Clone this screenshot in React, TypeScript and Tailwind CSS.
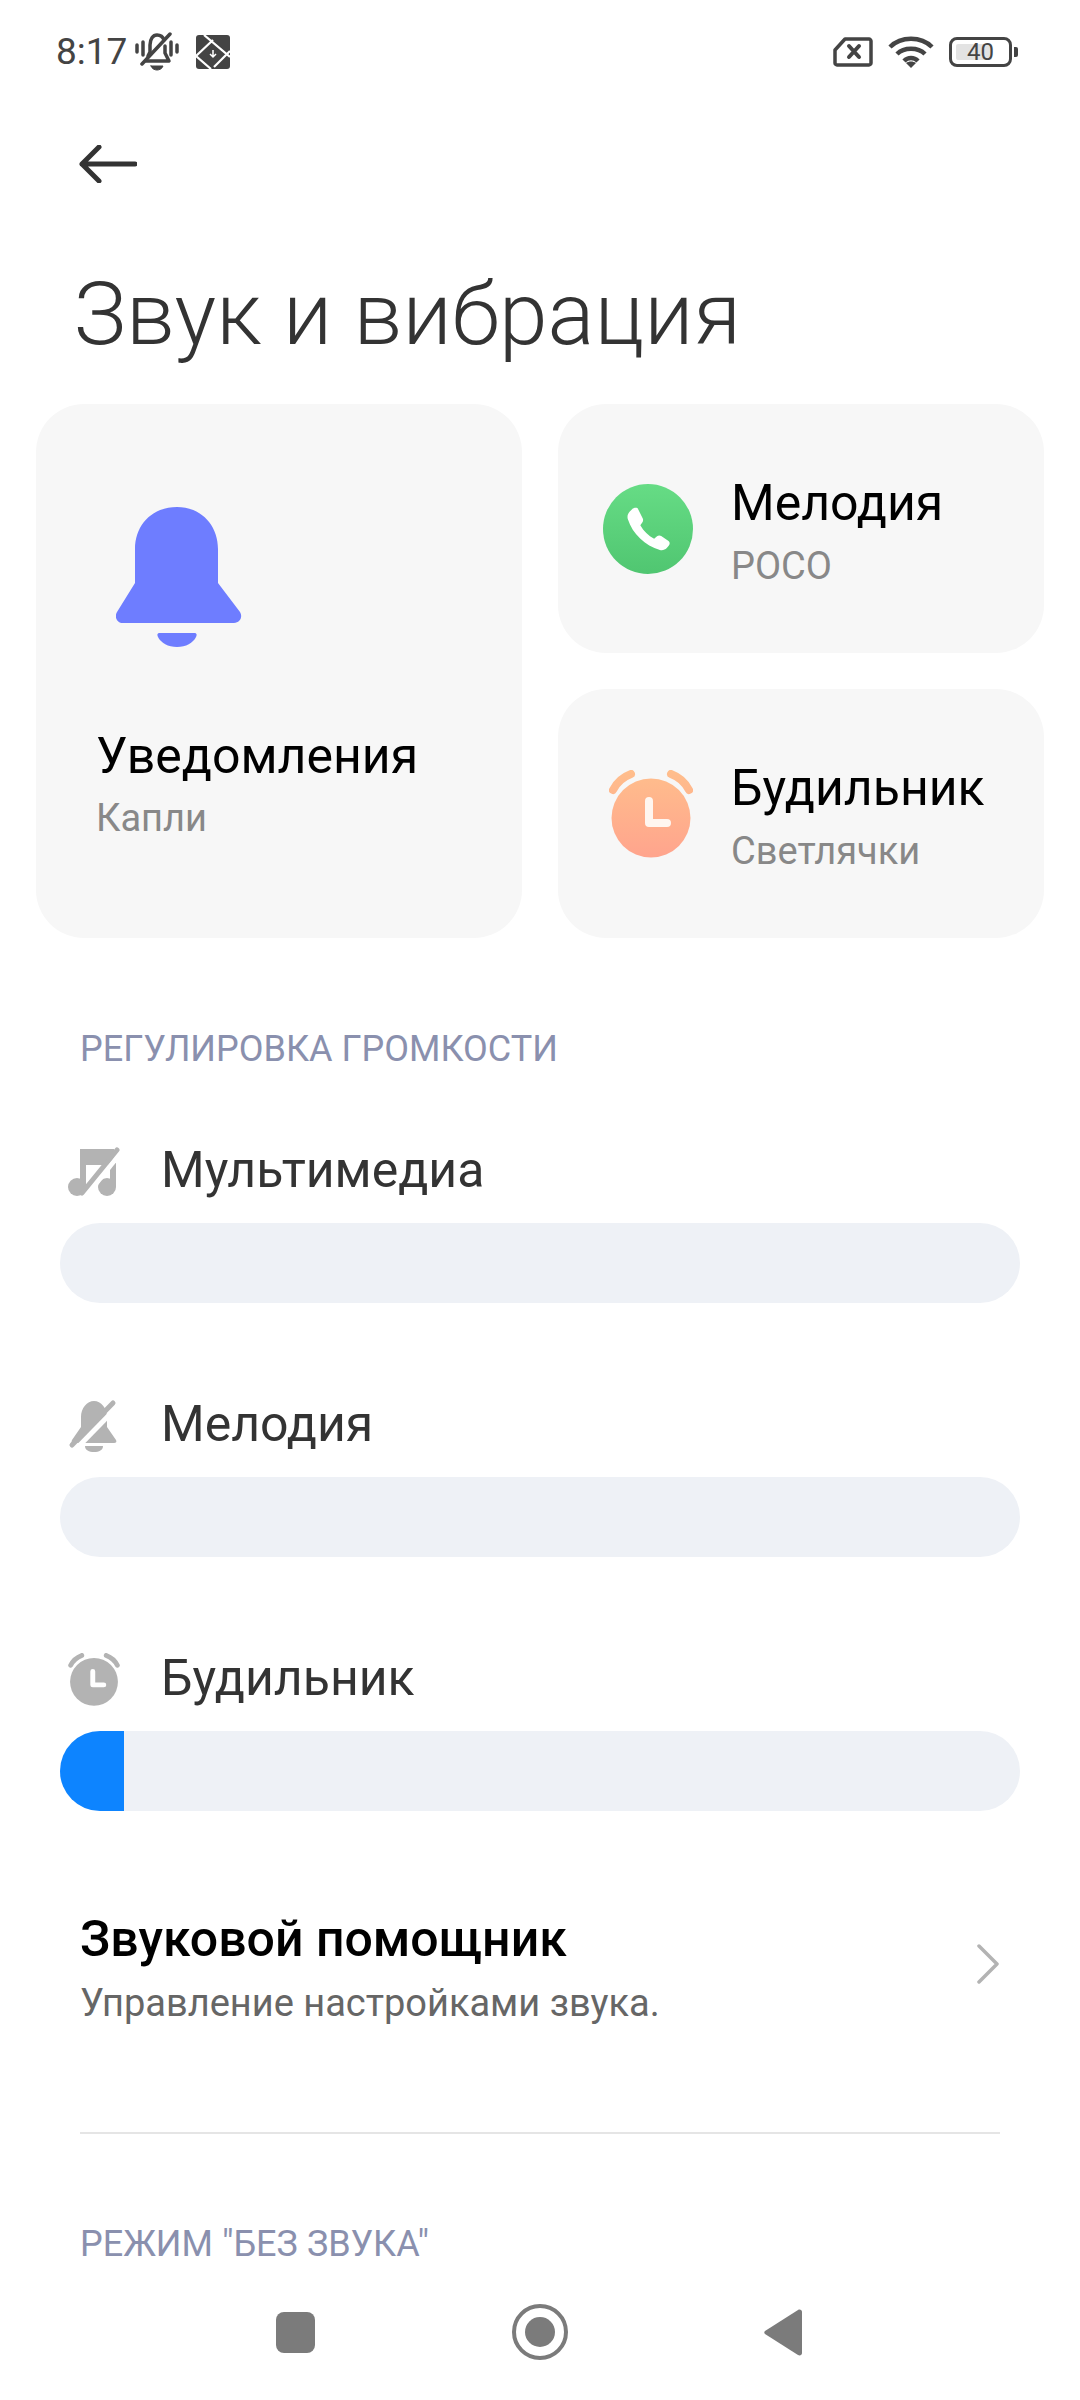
import React from "react";

const font = "font-['Roboto','Noto_Sans',sans-serif]";

function NoteOffIcon() {
  return (
    <svg width="52" height="50" viewBox="0 0 52 50" fill="none">
      <circle cx="9" cy="40" r="9" fill="#b3b3b3" />
      <circle cx="39" cy="40" r="9" fill="#b3b3b3" />
      <path d="M12 2H46V18H18V40H12Z" fill="#b3b3b3" />
      <rect x="42" y="16" width="6" height="24" fill="#b3b3b3" />
      <path d="M54 4L18 49" stroke="#fff" strokeWidth="5" />
      <path d="M49 3L14 46" stroke="#b3b3b3" strokeWidth="5" strokeLinecap="round" />
    </svg>
  );
}

function BellOffIcon() {
  return (
    <svg width="52" height="54" viewBox="0 0 52 54" fill="none">
      <path d="M13 18C13 9 19 2 26 2C33 2 39 9 39 18V28L48 41C49 43 48 44 46 44H6C4 44 3 43 4 41L13 28Z" fill="#b3b3b3" />
      <path d="M17 47H35C35 51 31 53 26 53C21 53 17 51 17 47Z" fill="#b3b3b3" />
      <path d="M50 7L7 51" stroke="#fff" strokeWidth="5" />
      <path d="M45 4L4 46" stroke="#b3b3b3" strokeWidth="5" strokeLinecap="round" />
    </svg>
  );
}

function GreyAlarmIcon() {
  return (
    <svg width="52" height="54" viewBox="0 0 84 88" fill="none">
      <circle cx="42" cy="47" r="39" fill="#b3b3b3" />
      <path d="M4 20C8 12 14 7 22 4M80 20C76 12 70 7 62 4" stroke="#b3b3b3" strokeWidth="8" strokeLinecap="round" />
      <path d="M40 30V52H58" stroke="#fff" strokeWidth="8" strokeLinecap="round" strokeLinejoin="round" />
    </svg>
  );
}

function VolumeRow({ icon, label, fill }: { icon: React.ReactNode; label: string; fill?: boolean }) {
  return (
    <div className="flex flex-col mb-[83px]">
      <div className="flex items-center h-[80px] mb-[11px] pl-[68px]">
        <div className="w-[93px] flex items-center">{icon}</div>
        <span className="text-[50px] leading-[56px] -translate-y-[2px] text-[#333333]">{label}</span>
      </div>
      <div className="mx-[60px] h-[80px] rounded-[40px] bg-[#eef1f6] overflow-hidden">
        {fill && <div className="h-full w-[64px] bg-[#0d84ff]" />}
      </div>
    </div>
  );
}

export default function App() {
  return (
    <div className={`${font} relative w-[1080px] h-[2400px] bg-white overflow-hidden flex flex-col`}>
      {/* status bar */}
      <div className="h-[104px] shrink-0 flex items-center justify-between pl-[56px] pr-[62px]">
        <div className="flex items-center">
          <span className="text-[37px] leading-[40px] text-[#444444]">8:17</span>
          <svg className="ml-[7px]" width="46" height="40" viewBox="0 0 46 40" fill="none" stroke="#444444" strokeLinecap="round">
            <path d="M3 13V20M9 10V23M37 10V23M43 13V20" strokeWidth="3.5" />
            <path d="M14 24L16 20V13C16 7 19 3 23 3C27 3 29 5 30 8M31 14V21L35 29H12" strokeWidth="3.5" strokeLinejoin="round" />
            <path d="M36 2L8 32" strokeWidth="3.5" />
            <path d="M17 34H29C28 37 25 38 23 38C21 38 18 37 17 34Z" fill="#444444" strokeWidth="1" />
          </svg>
          <svg className="ml-[16px]" width="34" height="34" viewBox="0 0 34 34">
            <rect width="34" height="34" rx="3" fill="#444444" />
            <path d="M8 0L34 22M0 21L17 5M0 21L15 34M34 16L18 32" stroke="#fff" strokeWidth="2.2" fill="none" />
            <path d="M17 15V22M14 19L17 22L20 19" stroke="#fff" strokeWidth="1.5" fill="none" />
          </svg>
        </div>
        <div className="flex items-center">
          <svg width="40" height="30" viewBox="0 0 40 30" fill="none">
            <path d="M2 13L12 2H36C37 2 38 3 38 4V26C38 27 37 28 36 28H4C3 28 2 27 2 26Z" stroke="#444444" strokeWidth="3.5" strokeLinejoin="round" />
            <path d="M16 9L26 20M26 9L16 20" stroke="#444444" strokeWidth="4" strokeLinecap="round" />
          </svg>
          <svg className="ml-[15px]" width="46" height="34" viewBox="0 0 46 34" fill="none" stroke="#444444" strokeWidth="4.5">
            <path d="M2 12C13 1 33 1 44 12" />
            <path d="M9 19C16 12 30 12 37 19" />
            <path d="M16 26C20 22 26 22 30 26" />
            <path d="M23 33L18 28C21 26 25 26 28 28Z" fill="#444444" stroke="none" />
          </svg>
          <div className="relative ml-[15px] w-[63px] h-[30px] rounded-[8px] border-[3px] border-[#444444]">
            <div className="absolute left-[4px] top-[4px] bottom-[4px] w-[36px] rounded-[2px] bg-[#e3e3e3]" />
            <span className="absolute inset-0 flex items-center justify-center text-[24px] leading-[24px] text-[#444444]">40</span>
          </div>
          <div className="ml-[2px] w-[4px] h-[10px] rounded-r-[2px] bg-[#444444]" />
        </div>
      </div>

      {/* back */}
      <div className="h-[120px] shrink-0 flex items-center pl-[79px]">
        <svg width="58" height="38" viewBox="0 0 58 38" fill="none" stroke="#333333" strokeWidth="5" strokeLinecap="round" strokeLinejoin="round">
          <path d="M56 19H3M20 2L3 19L20 36" />
        </svg>
      </div>

      <div className="h-[180px] shrink-0 flex items-center pl-[74px]">
        <h1 className="text-[87.500px] leading-[100px] font-light text-[#333333]">Звук и вибрация</h1>
      </div>

      {/* cards */}
      <div className="shrink-0 grid grid-cols-2 gap-x-[36px] px-[36px] h-[534px]">
        <div className="rounded-[48px] bg-[#f7f7f7] pl-[60px] flex flex-col">
          <svg className="ml-[20px] mt-[103px]" width="126" height="140" viewBox="0 0 126 140" fill="#6e7dff">
            <path d="M19 42C19 18 36 0 61 0C85 0 102 18 102 42V76L124 105C127 110 124 116 118 116H7C1 116-2 110 1 105L19 76Z" />
            <path d="M44 126H78C81 126 81 128 80 130C77 136 70 140 61 140C52 140 45 136 42 130C41 128 41 126 44 126Z" />
          </svg>
          <div className="mt-[81px] text-[50px] leading-[56px] text-black">Уведомления</div>
          <div className="mt-[12px] text-[38px] leading-[44px] text-[#888888]">Капли</div>
        </div>
        <div className="flex flex-col gap-[36px]">
          <div className="flex-1 rounded-[48px] bg-[#f7f7f7] flex items-center pl-[45px]">
            <div className="w-[128px] shrink-0">
              <div className="w-[90px] h-[90px] rounded-full bg-gradient-to-b from-[#66dc85] to-[#50c671] flex items-center justify-center">
                <svg width="46" height="46" viewBox="0 0 24 24" fill="#fff">
                  <path d="M6.6 1.2C5.6 0.7 4.4 1 3.7 1.7L2.5 2.9C1.5 3.9 1 5.4 1.5 6.9C2.7 10.7 5 14.200 7.900 17C10.800 19.800 14.300 21.800 18.200 22.900C19.500 23.300 20.900 22.800 21.800 21.900L22.800 20.800C23.500 20 23.500 18.800 22.700 18.200L18.900 15.700C18.200 15.200 17.300 15.300 16.700 15.800L15.200 17.100C12.200 15.500 9.700 13.300 8 10.100L9.100 8.500C9.500 7.900 9.600 7 9.200 6.400Z" />
                </svg>
              </div>
            </div>
            <div className="flex flex-col pt-[6px]">
              <div className="text-[50px] leading-[56px] text-black">Мелодия</div>
              <div className="mt-[13px] text-[38px] leading-[44px] text-[#888888]">POCO</div>
            </div>
          </div>
          <div className="flex-1 rounded-[48px] bg-[#f7f7f7] flex items-center pl-[51px]">
            <div className="w-[122px] shrink-0">
              <svg width="84" height="88" viewBox="0 0 84 88" fill="none">
                <defs>
                  <linearGradient id="alarm" gradientUnits="userSpaceOnUse" x1="0" y1="0" x2="0" y2="88">
                    <stop offset="0" stopColor="#ffbe8c" />
                    <stop offset="1" stopColor="#ffa48d" />
                  </linearGradient>
                </defs>
                <circle cx="42" cy="48" r="39.500" fill="url(#alarm)" />
                <path d="M4 20C8 12 14 7 22 4M80 20C76 12 70 7 62 4" stroke="url(#alarm)" strokeWidth="8" strokeLinecap="round" />
                <path d="M40 31V53H58" stroke="#fff6f0" strokeWidth="8" strokeLinecap="round" strokeLinejoin="round" />
              </svg>
            </div>
            <div className="flex flex-col pt-[6px]">
              <div className="text-[50px] leading-[56px] text-black">Будильник</div>
              <div className="mt-[13px] text-[38px] leading-[44px] text-[#888888]">Светлячки</div>
            </div>
          </div>
        </div>
      </div>

      {/* volume */}
      <div className="pl-[80px] mt-[89px] text-[36px] leading-[44px] text-[#8a90ae]">РЕГУЛИРОВКА ГРОМКОСТИ</div>
      <div className="mt-[61px] flex flex-col">
        <VolumeRow icon={<NoteOffIcon />} label="Мультимедиа" />
        <VolumeRow icon={<BellOffIcon />} label="Мелодия" />
        <VolumeRow icon={<GreyAlarmIcon />} label="Будильник" fill />
      </div>

      {/* assistant */}
      <div className="flex items-center justify-between pl-[80px] pr-[80px] mt-[17px]">
        <div className="flex flex-col">
          <div className="text-[50px] leading-[56px] font-medium text-black">Звуковой помощник</div>
          <div className="mt-[14px] text-[38px] leading-[44px] text-[#666666]">Управление настройками звука.</div>
        </div>
        <svg className="mb-[9px]" width="24" height="40" viewBox="0 0 24 40" fill="none" stroke="#b3b3b3" strokeWidth="3.5" strokeLinecap="round" strokeLinejoin="round">
          <path d="M3 2L21 20L3 38" />
        </svg>
      </div>
      <div className="mx-[80px] mt-[107px] h-[2px] bg-[#e5e5e5]" />
      <div className="pl-[80px] mt-[88px] text-[36px] leading-[44px] text-[#8a90ae]">РЕЖИМ "БЕЗ ЗВУКА"</div>

      {/* nav bar */}
      <div className="absolute left-0 right-0 bottom-0 h-[132px] bg-white flex items-center justify-between pl-[276px] pr-[278px] pb-[4px]">
        <div className="w-[39px] h-[41px] rounded-[8px] bg-[#7b7b7b]" />
        <div className="w-[56px] h-[56px] rounded-full border-[4px] border-[#7b7b7b] flex items-center justify-center">
          <div className="w-[30px] h-[30px] rounded-full bg-[#7b7b7b]" />
        </div>
        <svg width="38" height="47" viewBox="0 0 38 47" fill="#7b7b7b">
          <path d="M34 1C36 0 38 1 38 3V44C38 46 36 47 34 46L1 25C0 24 0 23 1 22Z" />
        </svg>
      </div>
    </div>
  );
}
